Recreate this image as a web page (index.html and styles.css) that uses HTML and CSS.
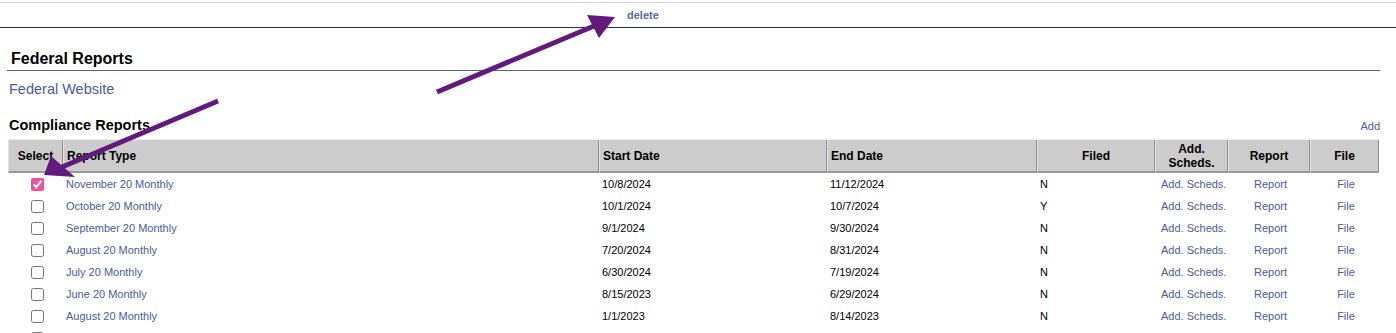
FILE: index.html
```html
<!DOCTYPE html>
<html lang="en">

<head>
    <meta charset="UTF-8">
    <title>Federal Reports</title>
    <link rel="stylesheet" href="styles.css">
</head>

<body>
    <div class="topbar">
        <a class="delete" href="#">delete</a>
    </div>

    <div class="section">
        <h2 class="title">Federal Reports</h2>
        <a class="site-link" href="#">Federal Website</a>

        <div class="list-head">
            <h3>Compliance Reports</h3>
            <a href="#" class="add">Add</a>
        </div>

        <table class="reports">
            <thead>
                <tr>
                    <th class="c-select">Select</th>
                    <th class="c-type left">Report Type</th>
                    <th class="c-start left">Start Date</th>
                    <th class="c-end left">End Date</th>
                    <th class="c-filed">Filed</th>
                    <th class="c-add">Add.<br>Scheds.</th>
                    <th class="c-report">Report</th>
                    <th class="c-file">File</th>
                </tr>
            </thead>
            <tbody>
                <tr>
                    <td class="sel"><input type="checkbox" checked></td>
                    <td><a href="#">November 20 Monthly</a></td>
                    <td>10/8/2024</td>
                    <td>11/12/2024</td>
                    <td>N</td>
                    <td class="mid"><a href="#">Add. Scheds.</a></td>
                    <td class="mid"><a href="#">Report</a></td>
                    <td class="mid"><a href="#">File</a></td>
                </tr>
                <tr>
                    <td class="sel"><input type="checkbox"></td>
                    <td><a href="#">October 20 Monthly</a></td>
                    <td>10/1/2024</td>
                    <td>10/7/2024</td>
                    <td>Y</td>
                    <td class="mid"><a href="#">Add. Scheds.</a></td>
                    <td class="mid"><a href="#">Report</a></td>
                    <td class="mid"><a href="#">File</a></td>
                </tr>
                <tr>
                    <td class="sel"><input type="checkbox"></td>
                    <td><a href="#">September 20 Monthly</a></td>
                    <td>9/1/2024</td>
                    <td>9/30/2024</td>
                    <td>N</td>
                    <td class="mid"><a href="#">Add. Scheds.</a></td>
                    <td class="mid"><a href="#">Report</a></td>
                    <td class="mid"><a href="#">File</a></td>
                </tr>
                <tr>
                    <td class="sel"><input type="checkbox"></td>
                    <td><a href="#">August 20 Monthly</a></td>
                    <td>7/20/2024</td>
                    <td>8/31/2024</td>
                    <td>N</td>
                    <td class="mid"><a href="#">Add. Scheds.</a></td>
                    <td class="mid"><a href="#">Report</a></td>
                    <td class="mid"><a href="#">File</a></td>
                </tr>
                <tr>
                    <td class="sel"><input type="checkbox"></td>
                    <td><a href="#">July 20 Monthly</a></td>
                    <td>6/30/2024</td>
                    <td>7/19/2024</td>
                    <td>N</td>
                    <td class="mid"><a href="#">Add. Scheds.</a></td>
                    <td class="mid"><a href="#">Report</a></td>
                    <td class="mid"><a href="#">File</a></td>
                </tr>
                <tr>
                    <td class="sel"><input type="checkbox"></td>
                    <td><a href="#">June 20 Monthly</a></td>
                    <td>8/15/2023</td>
                    <td>6/29/2024</td>
                    <td>N</td>
                    <td class="mid"><a href="#">Add. Scheds.</a></td>
                    <td class="mid"><a href="#">Report</a></td>
                    <td class="mid"><a href="#">File</a></td>
                </tr>
                <tr>
                    <td class="sel"><input type="checkbox"></td>
                    <td><a href="#">August 20 Monthly</a></td>
                    <td>1/1/2023</td>
                    <td>8/14/2023</td>
                    <td>N</td>
                    <td class="mid"><a href="#">Add. Scheds.</a></td>
                    <td class="mid"><a href="#">Report</a></td>
                    <td class="mid"><a href="#">File</a></td>
                </tr>
                <tr>
                    <td class="sel"><input type="checkbox"></td>
                    <td></td>
                    <td></td>
                    <td></td>
                    <td></td>
                    <td></td>
                    <td></td>
                    <td></td>
                </tr>
            </tbody>
        </table>
    </div>

    <!-- annotation arrows drawn over the page -->
    <svg class="arrows" width="1396" height="333" viewBox="0 0 1396 333">
        <line x1="437" y1="92" x2="594" y2="26" stroke="#621b7d" stroke-width="5" />
        <polygon points="615,17 587,15 599,38" fill="#621b7d" />
        <line x1="218" y1="101" x2="62" y2="167" stroke="#621b7d" stroke-width="5" />
        <polygon points="44,175 51,156 75,177" fill="#621b7d" />
    </svg>
</body>

</html>
```

FILE: styles.css
```css
* {
    margin: 0;
    padding: 0;
    box-sizing: border-box;
}

body {
    font-family: "Liberation Sans", Arial, sans-serif;
    color: #000;
    background: #fff;
    position: relative;
}

a {
    color: #4a5c95;
    text-decoration: none;
}

.topbar {
    margin-top: 2px;
    height: 26px;
    border-top: 1px solid #d4d4d4;
    border-bottom: 1px solid #1c2d6c;
    padding-left: 627px;
    line-height: 22px;
}

.delete {
    font-size: 11px;
    font-weight: bold;
    color: #5a6a9b;
}

.section {
    padding: 0 16px 0 7px;
}

.title {
    margin-top: 20px;
    padding-left: 4px;
    font-size: 16px;
    line-height: 22px;
    border-bottom: 1px solid #4d6396;
}

.site-link {
    display: block;
    margin-top: 10px;
    padding-left: 2px;
    font-size: 14.5px;
    line-height: 17px;
}

.list-head {
    display: flex;
    justify-content: space-between;
    align-items: baseline;
    margin-top: 19px;
    padding-left: 2px;
}

.list-head h3 {
    font-size: 14.5px;
    line-height: 17px;
}

.add {
    font-size: 11px;
}

.reports {
    width: 1371px;
    margin: 5px 0 0 1px;
    border-collapse: separate;
    border-spacing: 0;
    border-top: 1px solid #ececec;
    table-layout: fixed;
}

.reports th {
    background: #cccccc;
    font-size: 12px;
    line-height: 14px;
    height: 33px;
    padding: 1px 3px;
    text-align: center;
    vertical-align: middle;
    border-left: 1px solid #e4e4e4;
    border-right: 1px solid #8f8f8f;
    border-bottom: 2px solid #999;
}

.reports th.left {
    text-align: left;
}

.c-select { width: 55px; }
.c-type { width: 536px; }
.c-start { width: 228px; }
.c-end { width: 210px; }
.c-filed { width: 118px; }
.c-add { width: 73px; }
.c-report { width: 82px; }
.c-file { width: 69px; }

.reports td {
    height: 22px;
    padding: 0 3px;
    font-size: 11px;
    white-space: nowrap;
}

.reports td.mid {
    text-align: center;
    padding-left: 6px;
}

.reports td.sel {
    padding-left: 6px;
}

.sel input {
    display: block;
    width: 13px;
    height: 13px;
    margin: 0 auto;
    accent-color: #f0519c;
}

.arrows {
    position: absolute;
    top: 0;
    left: 0;
    pointer-events: none;
}
```
